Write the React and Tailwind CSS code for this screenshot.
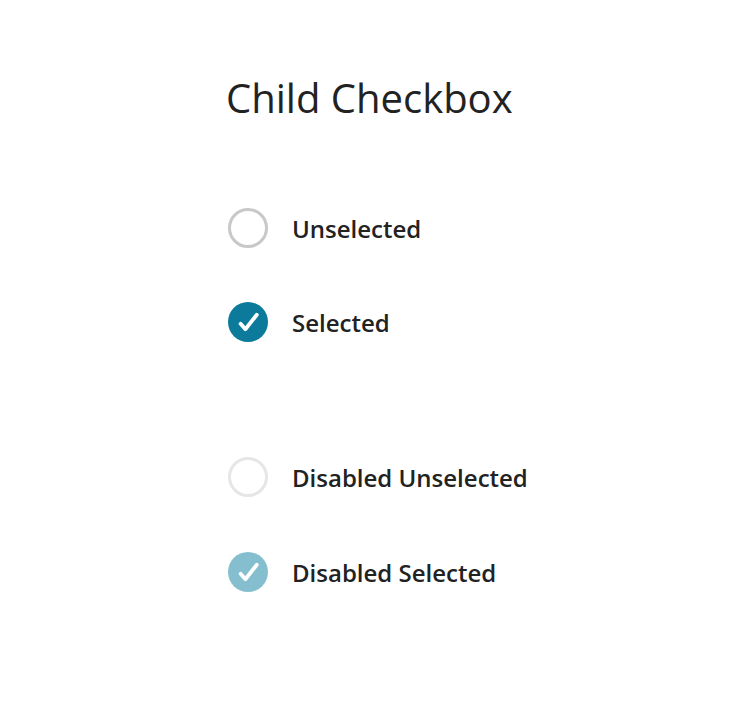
import React from 'react';

const Check = () => (
  <svg viewBox="0 0 40 40" className="w-10 h-10" fill="none" stroke="white" strokeWidth="3.8" strokeLinecap="round" strokeLinejoin="round">
    <path d="M12.6 21.8 L17.4 27.2 L28.8 12.8" />
  </svg>
);

const Radio = ({ checked, disabled }) => {
  if (checked) {
    return (
      <div className={`w-10 h-10 rounded-full flex items-center justify-center ${disabled ? 'bg-[#85bfcf]' : 'bg-[#0b7a9b]'}`}>
        <Check />
      </div>
    );
  }
  return (
    <div className={`w-10 h-10 rounded-full border-[3px] bg-white ${disabled ? 'border-[#e6e6e6]' : 'border-[#c8c8c8]'}`} />
  );
};

const Row = ({ label, checked, disabled }) => (
  <div className="flex items-center gap-6">
    <Radio checked={checked} disabled={disabled} />
    <span className="text-[24px] leading-9 pt-[2px] font-semibold text-[#222]">{label}</span>
  </div>
);

export default function App() {
  return (
    <div className="min-h-[724px] bg-white pl-[228px] pt-[74px] font-['Open_Sans',sans-serif]">
      <h1 className="text-[40px] leading-[48px] font-normal text-[#222] -ml-[2px]">Child Checkbox</h1>
      <div className="mt-[86px] flex flex-col gap-[54px]">
        <Row label="Unselected" />
        <Row label="Selected" checked />
      </div>
      <div className="mt-[115px] flex flex-col gap-[55px]">
        <Row label="Disabled Unselected" disabled />
        <Row label="Disabled Selected" checked disabled />
      </div>
    </div>
  );
}
